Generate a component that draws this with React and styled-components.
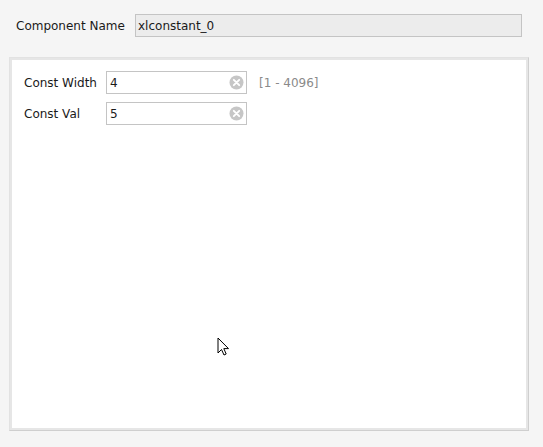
import React from 'react'
import styled, { createGlobalStyle } from 'styled-components'

const GlobalStyle = createGlobalStyle`
  html, body {
    margin: 0;
    padding: 0;
    background: #f5f5f5;
  }
  body {
    font-family: "DejaVu Sans", "Liberation Sans", sans-serif;
    font-size: 12px;
    color: #1a1a1a;
  }
`

const Page = styled.div`
  width: 543px;
  height: 447px;
  box-sizing: border-box;
  padding: 14px 14px 0 9px;
  position: relative;
  overflow: hidden;
`

const NameRow = styled.div`
  display: flex;
  align-items: center;
  padding-left: 7px;
  height: 23px;
`

const NameLabel = styled.span`
  width: 119px;
  flex-shrink: 0;
  white-space: nowrap;
`

const NameBox = styled.div`
  flex: 1;
  height: 23px;
  box-sizing: border-box;
  border: 1px solid #c4c4c4;
  background: #ececec;
  display: flex;
  align-items: center;
  padding-left: 2px;
  margin-right: 7px;
`

const Panel = styled.div`
  margin-top: 20px;
  width: 520px;
  height: 374px;
  box-sizing: border-box;
  border: 1px solid #cfcfcf;
  border-top-color: #e2e2e2;
  border-left-color: #e2e2e2;
  box-shadow: inset 0 0 0 2px #e6e6e6;
  background: #fff;
  padding: 13px 14px;
  display: grid;
  grid-template-columns: 75px 141px auto;
  grid-auto-rows: 23px;
  row-gap: 8px;
  column-gap: 7px;
  align-content: start;
  align-items: center;
`

const FieldLabel = styled.span`
  white-space: nowrap;
`

const Field = styled.div`
  height: 23px;
  box-sizing: border-box;
  border: 1px solid #c4c4c4;
  background: #fff;
  display: flex;
  align-items: center;
  justify-content: space-between;
  padding: 0 2px 0 3px;
`

const Range = styled.span`
  color: #8a8a8a;
  margin-left: 5px;
`

const ClearIcon = () => (
  <svg width="15" height="15" viewBox="0 0 15 15">
    <circle cx="7.5" cy="7.5" r="7" fill="#c6c6c6" />
    <path d="M4.8 4.8 L10.2 10.2 M10.2 4.8 L4.8 10.2" stroke="#fff" strokeWidth="1.9" strokeLinecap="round" />
  </svg>
)

const Cursor = styled.svg`
  position: absolute;
  left: 217px;
  top: 337px;
`

export default function App() {
  return (
    <>
      <GlobalStyle />
      <Page>
        <NameRow>
          <NameLabel>Component Name</NameLabel>
          <NameBox>xlconstant_0</NameBox>
        </NameRow>
        <Panel>
          <FieldLabel>Const Width</FieldLabel>
          <Field>4<ClearIcon /></Field>
          <Range>[1 - 4096]</Range>
          <FieldLabel>Const Val</FieldLabel>
          <Field>5<ClearIcon /></Field>
          <span />
        </Panel>
        <Cursor width="13" height="20" viewBox="0 0 13 20">
          <path d="M1 1 L1 16 L4.5 12.5 L7 18 L9.2 17 L6.8 11.6 L11.5 11.6 Z" fill="#fff" stroke="#000" strokeWidth="1" strokeLinejoin="round" />
        </Cursor>
      </Page>
    </>
  )
}
